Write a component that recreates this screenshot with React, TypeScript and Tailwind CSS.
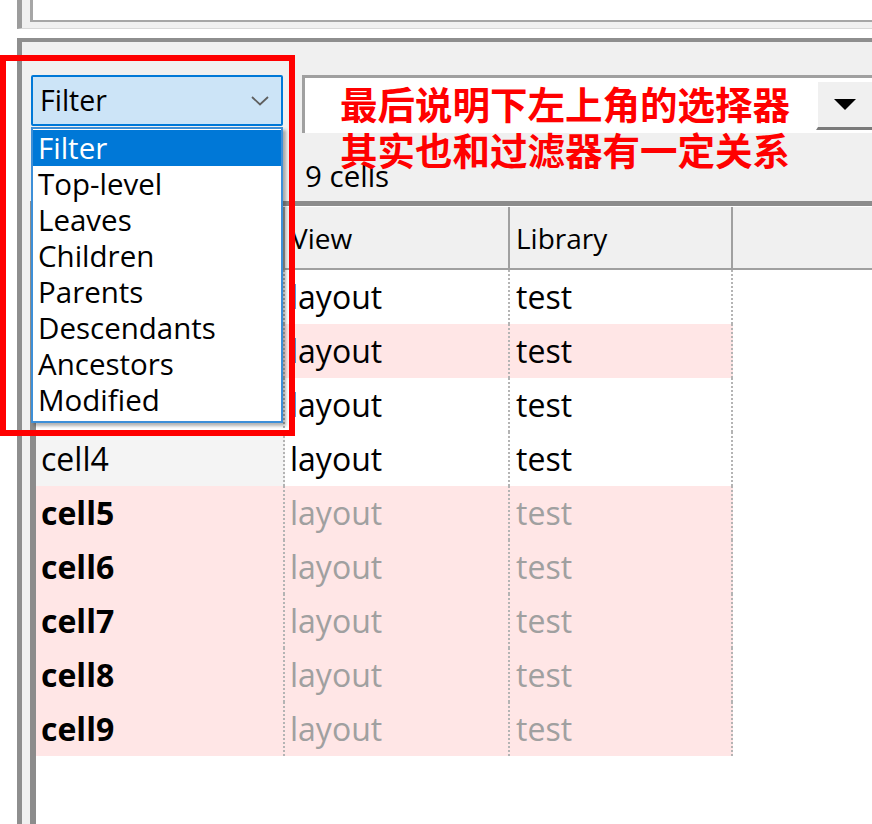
import React from 'react';

const font = { fontFamily: '"Open Sans", "Noto Sans", sans-serif' };

const filterOptions = ['Filter', 'Top-level', 'Leaves', 'Children', 'Parents', 'Descendants', 'Ancestors', 'Modified'];

type Row = { name: string; view: string; lib: string; pink: boolean; dim: boolean; current?: boolean };

// first three names sit under the open list, so they are left blank
const rows: Row[] = [
  { name: '', view: 'layout', lib: 'test', pink: false, dim: false },
  { name: '', view: 'layout', lib: 'test', pink: true, dim: false },
  { name: '', view: 'layout', lib: 'test', pink: false, dim: false },
  { name: 'cell4', view: 'layout', lib: 'test', pink: false, dim: false, current: true },
  { name: 'cell5', view: 'layout', lib: 'test', pink: true, dim: true },
  { name: 'cell6', view: 'layout', lib: 'test', pink: true, dim: true },
  { name: 'cell7', view: 'layout', lib: 'test', pink: true, dim: true },
  { name: 'cell8', view: 'layout', lib: 'test', pink: true, dim: true },
  { name: 'cell9', view: 'layout', lib: 'test', pink: true, dim: true },
];

const Chevron = () => (
  <svg width="18" height="10" viewBox="0 0 18 10" className="shrink-0">
    <polyline points="1,1 9,8.5 17,1" fill="none" stroke="#5f5f5f" strokeWidth="1.8" />
  </svg>
);

const FilterCombo = () => (
  <div className="relative w-[252px] shrink-0">
    <div className="h-[51px] flex items-center justify-between pl-[7px] pr-[12px] bg-[#cce4f7] border-2 border-[#0078d7] rounded-[2px]">
      <span className="text-[28.5px] text-black leading-none">Filter</span>
      <Chevron />
    </div>
    {/* open list */}
    <ul className="absolute left-0 top-[52px] w-[252px] bg-white border-2 border-[#3d8fd8] shadow-[3px_3px_3px_rgba(0,0,0,0.3)] z-10 pt-[1px] pb-[3px]">
      {filterOptions.map((opt, i) => (
        <li
          key={opt}
          className={
            'h-[36px] flex items-center pl-[5px] text-[29.5px] leading-none ' +
            (i === 0 ? 'bg-[#0078d7] text-white' : 'text-black')
          }
        >
          {opt}
        </li>
      ))}
    </ul>
  </div>
);

const TextCombo = () => (
  <div className="flex-1 h-[58px] bg-white border-t-[3px] border-l-[3px] border-[#a0a0a0] flex justify-end items-start pt-[4px]">
    <div className="w-[56px] h-[48px] bg-[#f0f0f0] border-l-2 border-l-white border-b-[3px] border-b-[#7a7a7a] flex items-center justify-center">
      <svg width="22" height="11" viewBox="0 0 22 11">
        <polygon points="0,0 22,0 11,11" fill="#000" />
      </svg>
    </div>
  </div>
);

export default function App() {
  return (
    <div className="w-[872px] h-[824px] bg-white relative overflow-hidden flex flex-col" style={font}>
      {/* top pane */}
      <div className="h-[29px] flex shrink-0">
        <div className="w-[17px]" />
        <div className="flex-1 border-l-[5px] border-[#9c9c9c] bg-[#f0f0f0] pl-[8px] border-b border-b-[#d8d8d8]">
          <div className="h-[22px] bg-white border-l-[3px] border-b-[2px] border-[#a6a6a6]" />
        </div>
      </div>
      <div className="h-[9px] shrink-0" />

      {/* lower pane */}
      <div className="flex-1 flex min-h-0">
        <div className="w-[17px]" />
        <div className="flex-1 flex flex-col border-l-[5px] border-t-[4px] border-[#8e8e8e] bg-[#f0f0f0]">
          {/* selectors */}
          <div className="flex items-start pt-[33px] pl-[9px] shrink-0">
            <FilterCombo />
            <div className="w-[19px] shrink-0" />
            <TextCombo />
          </div>

          <div className="h-[68px] flex items-center pl-[283px] pt-[18px] shrink-0">
            <span className="text-[29.5px] text-black leading-none">9 cells</span>
          </div>

          {/* table */}
          <div className="flex-1 ml-[8px] bg-white border-l-[6px] border-t-[5px] border-[#8c8c8c] flex flex-col">
            <div className="h-[64px] flex bg-[#f0f0f0] border-t border-t-white border-b-[2px] border-b-[#a0a0a0] text-[28px] text-black shrink-0">
              <div className="w-[249px] border-r-2 border-[#a0a0a0]" />
              <div className="w-[225px] border-r-2 border-[#a0a0a0] flex items-center pl-[6px]">View</div>
              <div className="w-[223px] border-r-2 border-[#a0a0a0] flex items-center pl-[6px]">Library</div>
              <div className="flex-1" />
            </div>
            {rows.map((r, i) => (
              <div key={i} className="h-[54px] flex text-[32px] leading-none shrink-0">
                <div
                  className={
                    'w-[249px] border-r-2 border-dotted border-[#b4b4b4] flex items-center pl-[5px] ' +
                    (r.current ? 'bg-[#f4f4f4] ' : r.pink ? 'bg-[#ffe6e6] ' : 'bg-white ') +
                    (r.dim ? 'font-bold text-black' : 'text-black')
                  }
                >
                  {r.name}
                </div>
                <div
                  className={
                    'w-[225px] border-r-2 border-dotted border-[#b4b4b4] flex items-center pl-[5px] ' +
                    (r.pink ? 'bg-[#ffe6e6] ' : 'bg-white ') +
                    (r.dim ? 'text-[#a0a0a0]' : 'text-black')
                  }
                >
                  {r.view}
                </div>
                <div
                  className={
                    'w-[223px] border-r-2 border-dotted border-[#b4b4b4] flex items-center pl-[6px] ' +
                    (r.pink ? 'bg-[#ffe6e6] ' : 'bg-white ') +
                    (r.dim ? 'text-[#a0a0a0]' : 'text-black')
                  }
                >
                  {r.lib}
                </div>
                <div className="flex-1" />
              </div>
            ))}
          </div>
        </div>
      </div>

      {/* annotation */}
      <div className="absolute left-0 top-[55px] w-[295px] h-[381px] border-[6px] border-[#ff0000] z-20 pointer-events-none" />
      <div
        className="absolute left-[340px] top-[80px] text-[37.5px] leading-[46px] font-bold text-[#ff0000] z-20 whitespace-nowrap"
        style={{ fontFamily: '"Noto Sans CJK SC", sans-serif' }}
      >
        <div>最后说明下左上角的选择器</div>
        <div>其实也和过滤器有一定关系</div>
      </div>
    </div>
  );
}
